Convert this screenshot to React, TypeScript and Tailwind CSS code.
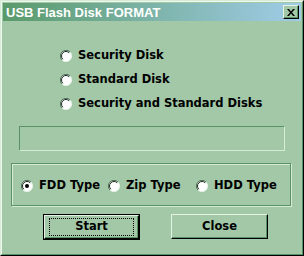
const FACE = "font-['DejaVu_Sans',sans-serif] font-bold text-[11.5px] leading-none text-black";

function Radio({ checked = false }: { checked?: boolean }) {
  return (
    <svg width="12" height="12" viewBox="0 0 12 12" className="shrink-0">
      <circle cx="6" cy="6" r="5.5" fill="#ffffff" />
      <path d="M10 2 A5.5 5.5 0 0 0 2 10" fill="none" stroke="#4f6e56" strokeWidth="1" />
      <path d="M9.2 2.8 A4.5 4.5 0 0 0 2.8 9.2" fill="none" stroke="#1c2a1f" strokeWidth="1" />
      <path d="M2 10 A5.5 5.5 0 0 0 10 2" fill="none" stroke="#e4f2e4" strokeWidth="1" />
      {checked && <circle cx="6" cy="6" r="2" fill="#000000" />}
    </svg>
  );
}

function Option({ label, checked }: { label: string; checked?: boolean }) {
  return (
    <div className="flex h-[24px] items-center gap-[6px]">
      <Radio checked={checked} />
      <span className={FACE}>{label}</span>
    </div>
  );
}

export default function App() {
  return (
    <div className="h-[256px] w-[304px] border border-t-[#d6ecd6] border-l-[#d6ecd6] border-r-black border-b-black bg-[#a2c8a7]">
      <div className="flex h-full flex-col border border-t-[#eef8ee] border-l-[#eef8ee] border-r-[#5a9266] border-b-[#5a9266] p-px">
        {/* title bar */}
        <div className="flex h-[18px] items-center justify-between bg-linear-to-r from-[#5a9a6a] to-[#a0cce8] pl-[3px] pr-[2px]">
          <span className="font-['Liberation_Sans',Arial,sans-serif] text-[13px] font-bold leading-none text-white">
            USB Flash Disk FORMAT
          </span>
          <button className="flex h-[14px] w-[16px] items-center justify-center border border-t-[#e4f2e4] border-l-[#e4f2e4] border-r-black border-b-black bg-[#a2c8a7] shadow-[inset_-1px_-1px_0_#5a9266]">
            <svg width="8" height="7" viewBox="0 0 8 7">
              <path d="M0 0h2l2 2.5L6 0h2L5 3.5 8 7H6L4 4.5 2 7H0l3-3.5z" fill="#000" />
            </svg>
          </button>
        </div>

        {/* disk options */}
        <div className="mt-[23px] flex flex-col pl-[57px]">
          <Option label="Security Disk" />
          <Option label="Standard Disk" />
          <Option label="Security and Standard Disks" />
        </div>

        {/* progress box */}
        <div className="mx-[16px] mt-[10px] h-[25px] border border-t-[#5a9266] border-l-[#5a9266] border-r-[#d6ecd6] border-b-[#d6ecd6]" />

        {/* type group */}
        <div className="ml-[8px] mt-[12px] flex h-[43px] w-[280px] items-center border border-[#5a9266] pl-[9px] pt-[2px] shadow-[inset_1px_1px_0_#d6ecd6,1px_1px_0_#d6ecd6]">
          <div className="w-[87px]">
            <Option label="FDD Type" checked />
          </div>
          <div className="w-[88px]">
            <Option label="Zip Type" />
          </div>
          <Option label="HDD Type" />
        </div>

        {/* buttons */}
        <div className="mt-[8px] flex gap-[31px] pl-[40px]">
          <button className="h-[26px] w-[97px] border border-black">
            <span className="flex h-full w-full items-center justify-center border border-t-[#e4f2e4] border-l-[#e4f2e4] border-r-black border-b-black shadow-[inset_-1px_-1px_0_#5a9266]">
              <span className="flex h-[18px] w-[85px] items-center justify-center border border-dotted border-black">
                <span className={FACE}>Start</span>
              </span>
            </span>
          </button>
          <button className="flex h-[25px] w-[97px] items-center justify-center border border-t-[#e4f2e4] border-l-[#e4f2e4] border-r-black border-b-black shadow-[inset_-1px_-1px_0_#5a9266]">
            <span className={FACE}>Close</span>
          </button>
        </div>
      </div>
    </div>
  );
}
